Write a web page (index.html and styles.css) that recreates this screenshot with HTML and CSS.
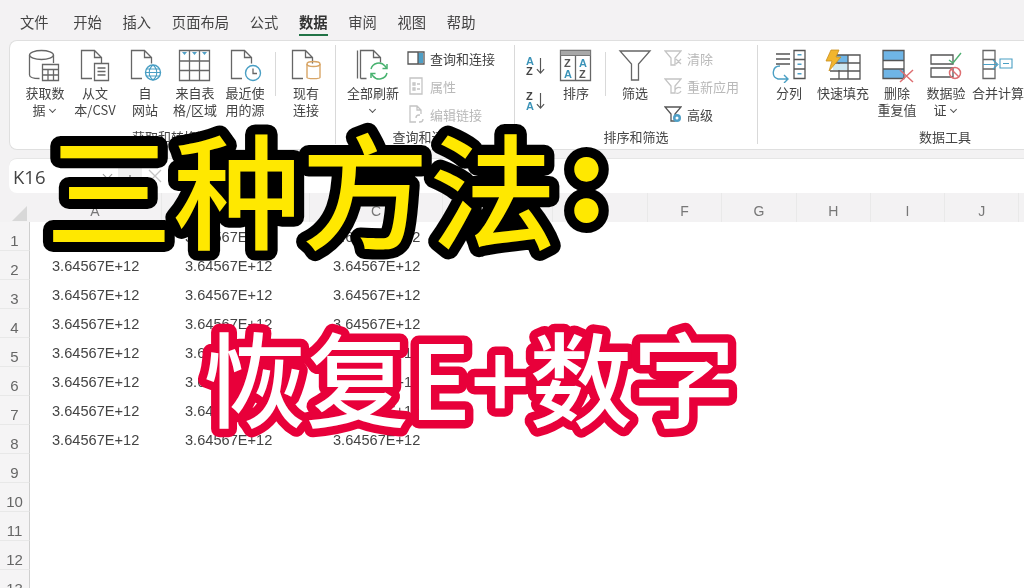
FILE: index.html
```html
<!DOCTYPE html>
<html lang="zh">
<head>
<meta charset="utf-8">
<title>三种方法</title>
<link rel="stylesheet" href="styles.css">
</head>
<body>
<div class="app">
  <nav class="tabs">
    <span class="tab first">文件</span>
    <span class="tab wide">开始</span>
    <span class="tab">插入</span>
    <span class="tab">页面布局</span>
    <span class="tab">公式</span>
    <span class="tab active">数据</span>
    <span class="tab">审阅</span>
    <span class="tab">视图</span>
    <span class="tab">帮助</span>
  </nav>

  <section class="ribbon">
    <div class="group g1">
      <div class="items">
        <div class="btn w50">
          <svg class="ico" viewBox="0 0 34 34"><path class="ln" d="M1.500 6v20c0 2 4 3.500 10 3.500M25.500 6v8"/><ellipse class="ln" cx="13.500" cy="6" rx="12" ry="4.500"/><path class="ln" d="M14.500 15.500h16v16h-16zM14.500 20.500h16M14.500 26h16M20 20.500v11M25.500 20.500v11"/></svg>
          <span>获取数<br>据 <i class="chev"></i></span>
        </div>
        <div class="btn w50">
          <svg class="ico" viewBox="0 0 34 34"><path class="ln" d="M14 29.500H3.500V1.500h13l7 7v6M16.500 1.500v7h7"/><path class="ln" d="M16.500 14.500h14v17h-14zM19.500 19h8M19.500 22.500h8M19.500 26h8"/></svg>
          <span>从文<br>本/CSV</span>
        </div>
        <div class="btn w50">
          <svg class="ico" viewBox="0 0 34 34"><path class="ln" d="M14 29.500H3.500V1.500h13l7 7v6M16.500 1.500v7h7"/><circle class="blue" cx="25" cy="23.500" r="7.500"/><path class="blue thin" d="M17.500 23.500h15M25 16c-5 4-5 11 0 15M25 16c5 4 5 11 0 15M18.500 20h13M18.500 27h13"/></svg>
          <span>自<br>网站</span>
        </div>
        <div class="btn w50">
          <svg class="ico" viewBox="0 0 34 34"><path class="ln" d="M1.500 1.500h30v30h-30zM1.500 12h30M1.500 21.500h30M11.500 1.500v30M21.500 1.500v30"/><path class="fillblue" d="M4 3h5l-2.500 3zM14 3h5l-2.500 3zM24 3h5l-2.500 3z"/></svg>
          <span>来自表<br>格/区域</span>
        </div>
        <div class="btn w50">
          <svg class="ico" viewBox="0 0 34 34"><path class="ln" d="M14 29.500H3.500V1.500h13l7 7v6M16.500 1.500v7h7"/><circle class="blue" cx="25" cy="24" r="7.500"/><path class="ln" d="M25 19.500v5h4"/></svg>
          <span>最近使<br>用的源</span>
        </div>
        <div class="sep short"></div>
        <div class="btn w50">
          <svg class="ico" viewBox="0 0 34 34"><path class="ln" d="M14 29.500H3.500V1.500h13l7 7v6M16.500 1.500v7h7"/><ellipse class="orange" cx="24.500" cy="15" rx="6.500" ry="2.500"/><path class="orange" d="M18 15v13.500c0 1.500 13 1.500 13 0V15"/></svg>
          <span>现有<br>连接</span>
        </div>
      </div>
      <div class="glabel">获取和转换数据</div>
    </div>

    <div class="group g2">
      <div class="items">
        <div class="btn w60">
          <svg class="ico" viewBox="0 0 34 34"><path class="ln" d="M1.500 1.500v28M4.500 29.500V1.500h13l7 7v5M17.500 1.500v7h7M4.500 29.500h6"/><path class="green" d="M15 20a8 8 0 0 1 14-3l1.500 2M31 24a8 8 0 0 1-14 3l-1.500-2"/><path class="green" d="M31 15v4.500h-4.500M15 29v-4.500h4.500"/></svg>
          <span>全部刷新<br><i class="chev"></i></span>
        </div>
        <div class="stack">
          <div class="small">
            <svg class="sico" viewBox="0 0 18 18"><path class="ln dark" d="M1 3h16v12H1z"/><path class="fillblue" d="M11 4h5v10h-5z"/><path class="ln dark" d="M11 3v12"/></svg>
            <span>查询和连接</span>
          </div>
          <div class="small off">
            <svg class="sico" viewBox="0 0 18 18"><path class="ln pale" d="M3 1h12v16H3zM6 6h2v2H6zM6 11h2v2H6zM10 7h3M10 12h3"/></svg>
            <span>属性</span>
          </div>
          <div class="small off">
            <svg class="sico" viewBox="0 0 18 18"><path class="ln pale" d="M9 17H3V1h7l4 4v4M10 1v4h4M9 13a3 3 0 0 1 3-3h1M16 14a3 3 0 0 1-3 3h-1"/></svg>
            <span>编辑链接</span>
          </div>
        </div>
      </div>
      <div class="glabel">查询和连接</div>
    </div>

    <div class="group g3">
      <div class="items">
        <div class="sortcol">
          <div class="sortkey"><span class="az"><b class="tl">A</b><b>Z</b></span><svg class="arrow" viewBox="0 0 10 20"><path class="ln dark" d="M5 1v17M1 13.500 5 18l4-4.500"/></svg></div>
          <div class="sortkey"><span class="az"><b>Z</b><b class="tl">A</b></span><svg class="arrow" viewBox="0 0 10 20"><path class="ln dark" d="M5 1v17M1 13.500 5 18l4-4.500"/></svg></div>
        </div>
        <div class="btn w40">
          <svg class="ico" viewBox="0 0 34 34"><path class="ln" d="M1.500 1.500h30v30h-30zM16.500 6.500v25"/><path class="hdr" d="M1.500 1.500h30v5h-30z"/><text x="5" y="18" class="lt dk">Z</text><text x="20" y="18" class="lt tlf">A</text><text x="5" y="29" class="lt tlf">A</text><text x="20" y="29" class="lt dk">Z</text></svg>
          <span>排序</span>
        </div>
        <div class="sep short s3"></div>
        <div class="btn w40">
          <svg class="ico" viewBox="0 0 34 34"><path class="ln" d="M2 2h30L20.500 15v16h-7V15z"/></svg>
          <span>筛选</span>
        </div>
        <div class="stack s3list">
          <div class="small off">
            <svg class="sico" viewBox="0 0 18 18"><path class="ln pale" d="M1 2h16l-6 7v7H7V9zM12 10l5 5M17 10l-5 5"/></svg>
            <span>清除</span>
          </div>
          <div class="small off">
            <svg class="sico" viewBox="0 0 18 18"><path class="ln pale" d="M1 2h16l-6 7v7H7V9zM11 13a4 4 0 0 1 6-2M17 14a4 4 0 0 1-5 2"/></svg>
            <span>重新应用</span>
          </div>
          <div class="small">
            <svg class="sico" viewBox="0 0 18 18"><path class="ln dark" d="M1 2h16l-6 7v7H7V9z"/><circle class="fillblue" cx="13" cy="13" r="4"/><circle class="hole" cx="13" cy="13" r="1.500"/></svg>
            <span>高级</span>
          </div>
        </div>
      </div>
      <div class="glabel">排序和筛选</div>
    </div>

    <div class="group g4">
      <div class="items">
        <div class="btn b-split">
          <svg class="ico wide" viewBox="0 0 38 34"><path class="ln dark" d="M24 1.500h11v28H24zM24 10.500h11M24 20h11"/><path class="fillblue" d="M27.500 5h4v1.500h-4zM27.500 14.500h4V16h-4zM27.500 24h4v1.500h-4z"/><path class="ln dark" d="M6 5h14M6 10h14M6 15h14"/><path class="blue" d="M10 17C2 17 1 28 8 30h10M14 26l4 4-4 4"/></svg>
          <span>分列</span>
        </div>
        <div class="btn b-flash">
          <svg class="ico wide" viewBox="0 0 38 34"><path class="skyfill" d="M12 6h12v8H8z"/><path class="ln dark" d="M6 30h30V6H12M8 14h28M6 22h30M24 6v24M15 14v16"/><path class="tint" d="M9 15h14v6H9z"/><path class="bolt" d="M7 1h8l-3 7h5L5 22l3-10H2z"/></svg>
          <span>快速填充</span>
        </div>
        <div class="btn b-dup">
          <svg class="ico wide" viewBox="0 0 38 34"><path class="skyfill" d="M5 1.500h21v10H5zM5 20h21v10H5z"/><path class="ln dark" d="M5 1.500h21v28H5zM5 11.500h21M5 20h21"/><path class="red" d="M22 21l13 12M35 21 22 33"/></svg>
          <span>删除<br>重复值</span>
        </div>
        <div class="btn b-val">
          <svg class="ico wide" viewBox="0 0 38 34"><path class="ln dark" d="M4 6h22v9H4zM4 19h22v9H4z"/><path class="greenck" d="M22 11l4 3 8-10"/><circle class="red" cx="28" cy="24" r="5.500"/><path class="red" d="M24 20l8 8"/></svg>
          <span>数据验<br>证 <i class="chev"></i></span>
        </div>
        <div class="btn b-merge">
          <svg class="ico wide" viewBox="0 0 38 34"><path class="ln" d="M4 1.500h12v28H4zM4 10.500h12M4 20h12"/><path class="blue thin" d="M4 15.500h14M14 11l5 4.500-5 4.500M21 10h12v9H21zM24 14.500h6"/></svg>
          <span>合并计算</span>
        </div>
      </div>
      <div class="glabel tools">数据工具</div>
    </div>
  </section>

  <section class="fbar">
    <div class="namebox">K16</div>
    <i class="chev fchev"></i>
    <span class="fdots">⋮</span>
    <svg class="fx" viewBox="0 0 14 14"><path class="ln pale" d="M1 1l12 12M13 1 1 13"/></svg>
  </section>

  <section class="sheet">
    <div class="colhead">
      <div class="corner"><svg class="tri" viewBox="0 0 15 15"><path d="M15 0v15H0z"/></svg></div>
      <div class="ch a">A</div><div class="ch b">B</div><div class="ch c">C</div>
      <div class="ch d">D</div><div class="ch e">E</div>
      <div class="ch f">F</div><div class="ch f">G</div><div class="ch f">H</div><div class="ch f">I</div><div class="ch f">J</div>
    </div>
    <div class="row"><div class="rh">1</div><div class="cell a">3.64567E+12</div><div class="cell b">3.64567E+12</div><div class="cell c">3.64567E+12</div></div>
    <div class="row"><div class="rh">2</div><div class="cell a">3.64567E+12</div><div class="cell b">3.64567E+12</div><div class="cell c">3.64567E+12</div></div>
    <div class="row"><div class="rh">3</div><div class="cell a">3.64567E+12</div><div class="cell b">3.64567E+12</div><div class="cell c">3.64567E+12</div></div>
    <div class="row"><div class="rh">4</div><div class="cell a">3.64567E+12</div><div class="cell b">3.64567E+12</div><div class="cell c">3.64567E+12</div></div>
    <div class="row"><div class="rh">5</div><div class="cell a">3.64567E+12</div><div class="cell b">3.64567E+12</div><div class="cell c">3.64567E+12</div></div>
    <div class="row"><div class="rh">6</div><div class="cell a">3.64567E+12</div><div class="cell b">3.64567E+12</div><div class="cell c">3.64567E+12</div></div>
    <div class="row"><div class="rh">7</div><div class="cell a">3.64567E+12</div><div class="cell b">3.64567E+12</div><div class="cell c">3.64567E+12</div></div>
    <div class="row"><div class="rh">8</div><div class="cell a">3.64567E+12</div><div class="cell b">3.64567E+12</div><div class="cell c">3.64567E+12</div></div>
    <div class="row"><div class="rh">9</div></div>
    <div class="row"><div class="rh">10</div></div>
    <div class="row"><div class="rh">11</div></div>
    <div class="row"><div class="rh">12</div></div>
    <div class="row"><div class="rh">13</div></div>
  </section>
</div>

<svg class="overlay" viewBox="0 0 1024 588">
  <text class="t-yellow" x="44" y="240">三种方法<tspan class="colon" dx="9" dy="-19">:</tspan></text>
  <text class="t-red" x="203" y="420">恢复E+数字</text>
</svg>
</body>
</html>
```

FILE: styles.css
```css
* { box-sizing: border-box; }
html, body { margin: 0; height: 100%; overflow: hidden; background: #fff; }
body {
  position: relative;
  width: 1024px;
  height: 588px;
  font-family: "Noto Sans CJK SC", "Liberation Sans", sans-serif;
  color: #444;
}
.app { display: flex; flex-direction: column; height: 588px; background: #f3f2f3; filter: blur(0.35px); }

.tabs { display: flex; height: 40px; padding: 0 0 0 20px; gap: 20.700px; flex: none; }
.tab { font-size: 14.300px; line-height: 20px; padding-top: 12px; height: 36px; color: #444; white-space: nowrap; }
.tab.wide { margin-left: 4px; }
.tab.active { font-weight: 700; color: #333; border-bottom: 2px solid #217346; }

.ribbon {
  display: flex; flex: none; height: 110px; margin-left: 9px; padding-left: 10px;
  background: #fff; border: 1px solid #dfdfdf; border-right: 0; border-radius: 8px 0 0 8px;
  overflow: hidden;
}
.group { display: flex; flex-direction: column; flex: none; border-right: 1px solid #d9d9d9; margin: 4px 0 5px; }
.g1 { width: 316px; }
.g2 { width: 179px; }
.g3 { width: 243px; }
.g4 { width: 270px; border-right: 0; }
.items { display: flex; height: 83px; flex: none; }
.glabel { height: 17px; text-align: center; font-size: 13px; line-height: 17px; color: #444; }
.glabel.tools { padding-left: 104px; }

.btn {
  display: flex; flex-direction: column; align-items: center; flex: none;
  padding-top: 4px; font-size: 13px; line-height: 17px; text-align: center; color: #444; white-space: nowrap;
}
.btn span { margin-top: 1px; }
.w50 { width: 50px; }
.w60 { width: 60px; margin: 0 4px 0 7px; }
.w40 { width: 40px; }
.ico { width: 34px; height: 34px; display: block; }
.ico.wide { width: 38px; }
.b-split { width: 44px; margin-left: 9px; }
.b-flash { width: 62px; margin-left: 1px; }
.b-dup { width: 46px; }
.b-val { width: 50px; margin-left: 1px; }
.b-merge { width: 54px; margin-left: 0; }

.sep.short { width: 1px; height: 44px; background: #d9d9d9; margin: 7px 5px 0 5px; flex: none; }
.sep.s3 { margin: 7px 9px 0 9px; }

.stack { display: flex; flex-direction: column; margin-top: -1px; flex: none; }
.s3list { margin-left: 9px; }
.small { display: flex; align-items: center; gap: 5px; height: 28.500px; font-size: 13px; color: #444; white-space: nowrap; }
.small.off { color: #b9b9b9; }
.sico { width: 18px; height: 18px; flex: none; }

.sortcol { display: flex; flex-direction: column; gap: 7px; width: 22px; margin: 7px 8px 0 11px; flex: none; }
.sortkey { display: flex; align-items: center; gap: 2px; height: 28px; }
.az { display: flex; flex-direction: column; font-size: 11px; line-height: 10px; }
.az b { font-weight: 700; color: #444; font-family: "Liberation Sans", sans-serif; }
.az b.tl { color: #3b93b8; }
.arrow { width: 9px; height: 20px; }

.ln { fill: none; stroke: #666; stroke-width: 1.300; }
.ln.dark { stroke: #555; }
.ln.pale { stroke: #c4c4c4; }
.blue { fill: none; stroke: #4a9fc4; stroke-width: 1.400; }
.blue.thin { stroke-width: 1.100; }
.green { fill: none; stroke: #47b26f; stroke-width: 1.500; }
.greenck { fill: none; stroke: #4fb071; stroke-width: 1.400; }
.orange { fill: none; stroke: #d8a566; stroke-width: 1.400; }
.red { fill: none; stroke: #de6f72; stroke-width: 1.500; }
.fillblue { fill: #4f9fc6; }
.hole { fill: #fff; }
.hdr { fill: #a8a8a8; stroke: #777; stroke-width: 1; }
.lt { font: 700 11px "Liberation Sans", sans-serif; }
.dk { fill: #555; }
.tlf { fill: #3b93b8; }
.skyfill { fill: #6fb5e6; }
.tint { fill: #cfe8f2; }
.bolt { fill: #f1b52e; stroke: #c98f1f; stroke-width: 0.800; }

.chev {
  display: inline-block; width: 5px; height: 5px; border-right: 1.300px solid #555; border-bottom: 1.300px solid #555;
  transform: rotate(45deg); margin: 0 2px 3px 2px;
}

.fbar {
  display: flex; align-items: center; flex: none; height: 35px; margin: 8px 0 0 9px; padding-left: 4px;
  background: #fff; border-top: 1px solid #e6e6e6; border-radius: 8px 0 0 8px;
}
.namebox { width: 90px; font: 18.500px "Open Sans", "Liberation Sans", sans-serif; color: #444; }
.fchev { margin: 0 0 3px 1px; width: 7px; height: 7px; border-color: #999; }
.fdots { width: 24px; height: 27px; margin: 7px 0 0 7px; background: #efefef; color: #888; font-size: 14px; line-height: 27px; text-align: center; }
.fx { width: 14px; height: 14px; margin-left: 6px; }

.sheet { flex: 1; background: #fff; overflow: hidden; }
.colhead { display: flex; height: 29px; background: #f3f2f3; }
.corner { width: 29px; flex: none; padding: 13px 0 0 12px; }
.tri { display: block; width: 15px; height: 15px; fill: #d8d8d8; }
.ch {
  flex: none; text-align: center; font: 14px/29px "Liberation Sans", sans-serif; color: #777;
  border-right: 1px solid #e9e9e9; padding-top: 4px;
}
.a { width: 133px; }
.b { width: 148px; }
.c { width: 133px; }
.d { width: 110px; }
.e { width: 95px; padding-right: 8px; }
.f { width: 74.300px; }

.row { display: flex; height: 29px; }
.rh {
  width: 30px; flex: none; background: #f5f4f5; border-right: 1px solid #cfcfcf; border-bottom: 1px solid #e8e8e8;
  font: 15px/29px "Liberation Sans", sans-serif; color: #666; text-align: center; padding: 4px 0 0 0;
}
.cell {
  flex: none; font: 14.600px/29px "Liberation Sans", sans-serif; color: #444; padding: 1px 0 0 22px; white-space: nowrap;
}

.overlay { position: absolute; left: 0; top: 0; width: 1024px; height: 588px; }
.t-yellow, .t-red {
  font-family: "Noto Sans CJK SC", sans-serif; font-weight: 500;
  paint-order: stroke fill; stroke-linejoin: round; stroke-linecap: round;
}
.t-yellow { font-size: 125px; fill: #ffe800; stroke: #000; stroke-width: 20px; transform: scaleX(1.024); }
.colon { font-size: 112px; font-weight: 900; }
.t-red { font-size: 103px; fill: #fff; stroke: #e8003a; stroke-width: 17px; }
```
